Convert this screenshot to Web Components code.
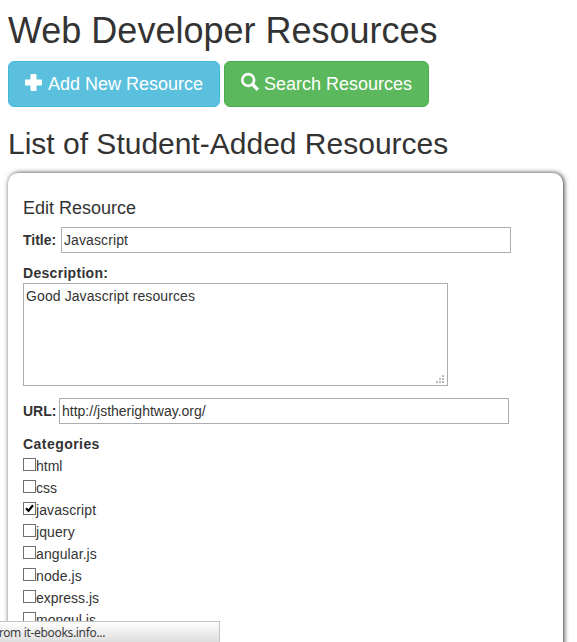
<!DOCTYPE html>
<html lang="en">
<head>
<meta charset="utf-8">
<title>Web Developer Resources</title>
<style>
body{margin:0;background:#fff;color:#333;font:14px/20px "Liberation Sans",Arial,sans-serif}
</style>
</head>
<body>
<resource-app></resource-app>
<script>
const define = (name, html) => {
  const t = document.createElement('template');
  t.innerHTML = html;
  customElements.define(name, class extends HTMLElement {
    constructor() {
      super();
      this.attachShadow({mode: 'open'}).append(t.content.cloneNode(true));
    }
  });
};

define('big-button', `<style>
:host{display:flex;box-sizing:border-box;height:46px;border:1px solid var(--edge);border-radius:6px;background:var(--fill);color:#fff;font-size:18px;line-height:24px;padding:10px 16px;white-space:nowrap}
slot[name=icon]{display:block;width:18px;margin-right:5px}
</style><slot name="icon"></slot><span><slot></slot></span>`);

define('text-field', `<style>
:host{display:flex;align-items:center;height:26px}
b{width:var(--label);white-space:nowrap}
.box{box-sizing:border-box;width:450px;height:26px;border:1px solid #abadb3;padding:2px;line-height:21px;background:#fff;letter-spacing:var(--track,0)}
</style><b><slot name="label"></slot></b><div class="box"><slot></slot></div>`);

define('text-area', `<style>
:host{display:block}
b{display:block;height:20px;letter-spacing:.3px}
.box{box-sizing:border-box;display:flex;justify-content:space-between;width:425px;height:103px;border:1px solid #abadb3;padding:2px;line-height:20px;letter-spacing:.1px}
svg{align-self:flex-end;display:block;margin-right:1px}
</style><b><slot name="label"></slot></b><div class="box"><span><slot></slot></span><svg width="8" height="8" fill="#bbb" shape-rendering="crispEdges"><path d="M6 0h2v2h-2zM3 3h2v2h-2zM6 3h2v2h-2zM0 6h2v2h-2zM3 6h2v2h-2zM6 6h2v2h-2z"/></svg></div>`);

define('check-item', `<style>
:host{display:flex;height:22px;line-height:20px;letter-spacing:var(--track,0)}
svg{display:block;width:13px;height:13px;margin-top:2px}
path{display:none}
:host([checked]) path{display:block}
</style><svg viewBox="0 0 13 13"><rect x=".5" y=".5" width="12" height="12" fill="#fff" stroke="#707070"/><path d="M3 6.200 5.500 8.800 10 3.200" fill="none" stroke="#000" stroke-width="2.200"/></svg><span><slot></slot></span>`);

define('resource-card', `<style>
:host{display:block;box-sizing:border-box;width:555px;height:520px;border-radius:10px;background:#fff;box-shadow:1px 0 5px #333;padding:25px 15px 0}
</style><slot></slot>`);

define('status-bubble', `<style>
:host{display:block;box-sizing:border-box;position:fixed;left:0;bottom:0;width:220px;height:21px;border:solid #c3c3c3;border-width:1px 1px 0 0;background:linear-gradient(#fff,#dedede);overflow:hidden;font:12px/22px "Noto Sans",sans-serif;color:#3c3c3c;white-space:nowrap}
span{display:block;margin-left:-5px;letter-spacing:-.33px}
</style><span><slot></slot></span>`);

define('resource-app', `<style>
:host{display:block;box-sizing:border-box;height:642px;overflow:hidden;padding:11px 8px 0}
h1,h2,h4{margin:0;font-weight:400;white-space:nowrap}
h1{font-size:36px;line-height:40px;height:50px}
h2{font-size:30px;line-height:33px;margin-top:20px;height:46px}
h4{font-size:18px;line-height:20px;margin-bottom:9px}
.row{display:flex;gap:4px}
svg{display:block}
.title{--label:38px;--track:.1px}
.desc{margin-top:10px}
.url{margin-top:12px;--label:36px}
.cats{display:block;margin-top:10px;height:22px;letter-spacing:.45px}
.wide{--track:.1px}
</style>
<h1>Web Developer Resources</h1>
<div class="row">
<big-button style="--fill:#5bc0de;--edge:#46b8da;width:212px"><svg slot="icon" width="18" height="24" viewBox="0 0 18 24"><path fill="#fff" d="M6.500 2h4q1 0 1 1v4.500h4.500q1 0 1 1v4q0 1-1 1h-4.500v4.500q0 1-1 1h-4q-1 0-1-1v-4.500h-4.500q-1 0-1-1v-4q0-1 1-1h4.500v-4.500q0-1 1-1z"/></svg>Add New Resource</big-button>
<big-button style="--fill:#5cb85c;--edge:#4cae4c;width:205px"><svg slot="icon" width="18" height="24" viewBox="0 0 18 24"><g fill="none" stroke="#fff"><circle cx="7.200" cy="8" r="5.900" stroke-width="2.600"/><path d="m11.200 12 5.700 5.700" stroke-width="3.400"/></g></svg>Search Resources</big-button>
</div>
<h2>List of Student-Added Resources</h2>
<resource-card>
<h4>Edit Resource</h4>
<text-field class="title"><span slot="label">Title:</span>Javascript</text-field>
<text-area class="desc"><span slot="label">Description:</span>Good Javascript resources</text-area>
<text-field class="url"><span slot="label">URL:</span>http://jstherightway.org/</text-field>
<b class="cats">Categories</b>
<check-item>html</check-item>
<check-item>css</check-item>
<check-item class="wide" checked>javascript</check-item>
<check-item class="wide">jquery</check-item>
<check-item class="wide">angular.js</check-item>
<check-item class="wide">node.js</check-item>
<check-item>express.js</check-item>
<check-item>mongul.js</check-item>
</resource-card>
<status-bubble>from it-ebooks.info...</status-bubble>`);
</script>
</body>
</html>
